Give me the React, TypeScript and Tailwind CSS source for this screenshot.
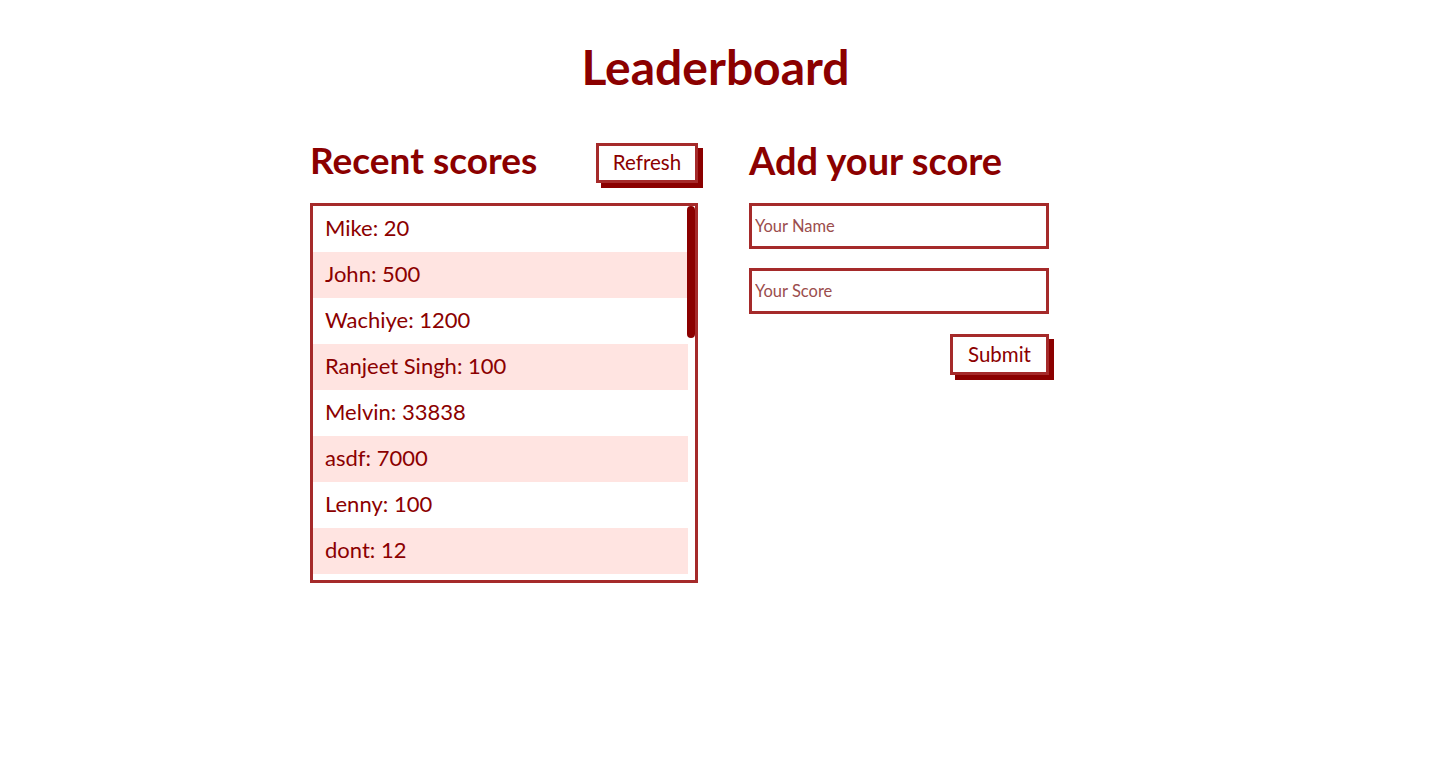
import React from "react";

const scores: [string, number][] = [
  ["Mike", 20],
  ["John", 500],
  ["Wachiye", 1200],
  ["Ranjeet Singh", 100],
  ["Melvin", 33838],
  ["asdf", 7000],
  ["Lenny", 100],
  ["dont", 12],
];

export default function App() {
  return (
    <div
      className="min-h-screen bg-white text-[#8b0000]"
      style={{ fontFamily: "Lato, 'Open Sans', sans-serif" }}
    >
      <h1 className="pt-[38px] text-center text-[48px] font-bold leading-[1.2]">
        Leaderboard
      </h1>
      <div className="mx-auto mt-[47px] flex w-[811px] gap-[51px]">
        <section className="w-[388px]">
          <div className="flex h-[40px] items-center justify-between">
            <h2 className="pb-[6px] text-[37px] font-bold leading-none">Recent scores</h2>
            <button className="h-[40px] w-[102px] border-[3px] border-[#a52a2a] bg-white text-[20.5px] text-[#8b0000] shadow-[5px_5px_0_#8b0000]">
              Refresh
            </button>
          </div>
          <div className="relative mt-[20px] h-[380px] border-[3px] border-[#a52a2a] bg-white">
            <ul className="mr-[7px] overflow-hidden">
              {scores.map(([n, s], i) => (
                <li
                  key={i}
                  className={`flex h-[46px] items-center pb-[2px] pl-[12px] text-[22px] ${
                    i % 2 === 1 ? "bg-[#ffe4e1]" : "bg-white"
                  }`}
                >
                  {n}: {s}
                </li>
              ))}
            </ul>
            <div className="absolute right-0 top-0 h-[132px] w-[8px] rounded-full bg-[#8b0000]" />
          </div>
        </section>
        <section className="w-[300px]">
          <div className="flex h-[40px] items-center">
            <h2 className="pb-[6px] text-[38px] font-bold leading-none">Add your score</h2>
          </div>
          <form className="mt-[20px] flex flex-col" onSubmit={(e) => e.preventDefault()}>
            <input
              placeholder="Your Name"
              className="h-[46px] w-[300px] border-[3px] border-[#a52a2a] px-[3px] text-[16.5px] text-[#8b0000] outline-none placeholder:text-[#9b4d4d]"
            />
            <input
              placeholder="Your Score"
              className="mt-[19px] h-[46px] w-[300px] border-[3px] border-[#a52a2a] px-[3px] text-[16.5px] text-[#8b0000] outline-none placeholder:text-[#9b4d4d]"
            />
            <div className="mt-[20px] flex justify-end">
              <button className="h-[41px] w-[99px] border-[3px] border-[#a52a2a] bg-white text-[20.5px] text-[#8b0000] shadow-[5px_5px_0_#8b0000]">
                Submit
              </button>
            </div>
          </form>
        </section>
      </div>
    </div>
  );
}
